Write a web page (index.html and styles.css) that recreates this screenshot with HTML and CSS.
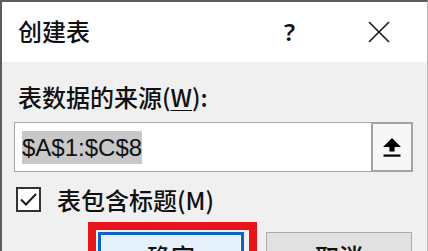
FILE: index.html
```html
<!DOCTYPE html>
<html lang="zh">
<head>
<meta charset="utf-8">
<link rel="stylesheet" href="styles.css">
</head>
<body>
<div class="window">
  <div class="titlebar">
    <span class="title">创建表</span>
    <span class="help">?</span>
    <span class="close">
      <svg width="24" height="22" viewBox="0 0 24 22"><path d="M2 1 L22 21 M22 1 L2 21" stroke="#1a1a1a" stroke-width="1.6" fill="none"/></svg>
    </span>
  </div>
  <div class="content">
    <div class="label">表数据的来源(<u>W</u>):</div>
    <div class="inputrow">
      <div class="field"><span class="sel">$A$1:$C$8</span></div>
      <div class="pick">
        <svg width="20" height="20" viewBox="0 0 20 20"><path d="M10 0 L19 9 L12.6 9 L12.6 13.5 L7.4 13.5 L7.4 9 L1 9 Z" fill="#000"/><rect x="1.5" y="16.5" width="17" height="2.2" fill="#000"/></svg>
      </div>
    </div>
    <div class="checkrow">
      <span class="box">
        <svg width="21" height="21" viewBox="0 0 21 21"><path d="M3 10.5 L8 15.5 L18 5" stroke="#1a1a1a" stroke-width="2" fill="none"/></svg>
      </span>
      <span class="checklabel">表包含标题(M)</span>
    </div>
    <div class="buttons">
      <div class="btn ok">确定</div>
      <div class="btn cancel">取消</div>
    </div>
  </div>
  <div class="annot"></div>
</div>
</body>
</html>
```
FILE: styles.css
```css
html, body {
  margin: 0;
  padding: 0;
  background: #f0f0f0;
}
.window {
  position: relative;
  width: 428px;
  height: 251px;
  box-sizing: border-box;
  border-top: 2px solid #5c5c5c;
  border-left: 2px solid #5c5c5c;
  border-right: 1px solid #b8b8b8;
  overflow: hidden;
  background: #f0f0f0;
  font-family: "Noto Sans CJK SC", "Noto Sans", sans-serif;
  font-weight: 500;
  color: #111111;
}
.titlebar {
  height: 60px;
  background: #ffffff;
  display: flex;
  align-items: center;
  font-size: 24px;
  line-height: 30px;
}
.title {
  margin-left: 16px;
  flex: 1;
  padding-bottom: 2px;
}
.help {
  font-family: "Noto Sans", sans-serif;
  font-weight: 600;
  font-size: 24px;
  width: 12px;
  padding-bottom: 1px;
}
.close {
  margin-left: 71px;
  margin-right: 36px;
  display: flex;
  padding-bottom: 1px;
}
.content {
  padding: 0 14px 0 12px;
}
.label {
  margin-top: 20px;
  margin-left: 4px;
  height: 30px;
  font-size: 24px;
  line-height: 30px;
}
.label u {
  text-decoration-thickness: 1px;
  text-underline-offset: 3px;
}
.inputrow {
  margin-top: 10px;
  height: 50px;
  display: flex;
}
.field {
  flex: 1;
  box-sizing: border-box;
  border: 1px solid #a6a6a6;
  border-right: none;
  background: #ffffff;
  padding-left: 7px;
  display: flex;
  align-items: center;
}
.sel {
  font-family: "Liberation Sans", "Noto Sans", sans-serif;
  font-weight: 400;
  font-size: 24px;
  line-height: 33px;
  height: 33px;
  background: #c8c8c8;
  color: #111;
}
.pick {
  width: 42px;
  box-sizing: border-box;
  border: 2px solid #a3a3a3;
  background: #f7f7f7;
  display: flex;
  align-items: center;
  justify-content: center;
  padding-top: 2px;
}
.checkrow {
  margin-top: 15px;
  height: 25px;
  display: flex;
  align-items: center;
  margin-left: 2px;
}
.box {
  width: 25px;
  height: 25px;
  box-sizing: border-box;
  border: 2px solid #333333;
  background: #ffffff;
  display: flex;
}
.checklabel {
  margin-left: 16px;
  font-size: 24px;
  line-height: 30px;
}
.buttons {
  margin-top: 20px;
  display: flex;
  margin-left: 84px;
  gap: 22px;
}
.btn {
  width: 146px;
  height: 46px;
  box-sizing: border-box;
  font-size: 24px;
  display: flex;
  align-items: center;
  justify-content: center;
}
.ok {
  border: 3px solid #0a64c8;
  background: #e5f1fb;
  box-shadow: inset 0 0 0 1px #ffffff;
}
.cancel {
  border: 1px solid #adadad;
  background: #e1e1e1;
}
.annot {
  position: absolute;
  left: 86px;
  top: 220px;
  width: 169px;
  height: 60px;
  box-sizing: border-box;
  border: 8px solid #e8141c;
}
```
